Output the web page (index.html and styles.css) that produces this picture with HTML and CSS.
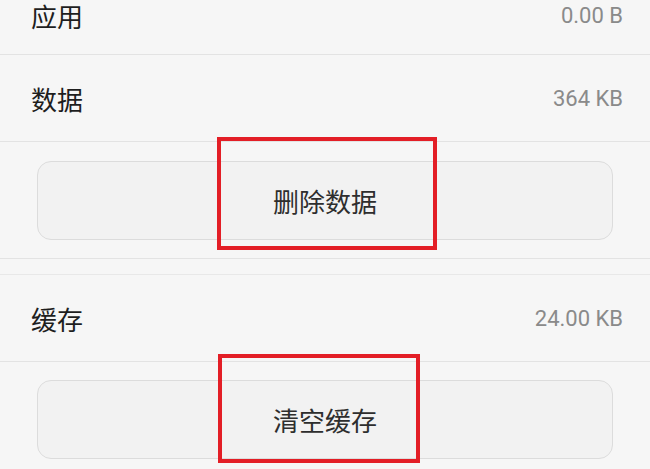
FILE: index.html
```html
<!DOCTYPE html>
<html lang="zh-CN">
<head>
<meta charset="utf-8">
<title>存储</title>
<link rel="stylesheet" href="styles.css">
</head>
<body>
<div class="page">
  <div class="list">
    <div class="row row-first">
      <span class="label">应用</span>
      <span class="value">0.00 B</span>
    </div>
    <div class="row">
      <span class="label">数据</span>
      <span class="value">364 KB</span>
    </div>
    <div class="action">
      <div class="btn">删除数据</div>
    </div>
    <div class="spacer"></div>
    <div class="row">
      <span class="label">缓存</span>
      <span class="value">24.00 KB</span>
    </div>
    <div class="action action-last">
      <div class="btn">清空缓存</div>
    </div>
  </div>
  <div class="mark mark-1"></div>
  <div class="mark mark-2"></div>
</div>
</body>
</html>
```

FILE: styles.css
```css
html, body {
  margin: 0;
  padding: 0;
}
body {
  background: #f6f6f6;
  font-family: "Noto Sans CJK SC", "Noto Sans", sans-serif;
}
.page {
  position: relative;
  width: 650px;
  height: 469px;
  overflow: hidden;
  background: #f6f6f6;
}
.list {
  display: flex;
  flex-direction: column;
}
.row {
  height: 86px;
  display: flex;
  align-items: center;
  justify-content: space-between;
  padding: 0 27px 0 31px;
  border-bottom: 1px solid #e3e3e3;
}
.row-first {
  box-sizing: border-box;
  height: 55px;
  align-items: flex-start;
}
.label {
  font-size: 26px;
  line-height: 31px;
  color: #1e1e1e;
}
.value {
  font-family: Roboto, "Liberation Sans", sans-serif;
  font-size: 22px;
  line-height: 31px;
  color: #8a8a8a;
}
.action {
  padding: 19px 37px 18px;
  border-bottom: 1px solid #e3e3e3;
}
.action-last {
  border-bottom: none;
  padding-top: 18px;
}
.spacer {
  height: 15px;
  border-bottom: 1px solid #e8e8e8;
}
.btn {
  box-sizing: border-box;
  height: 79px;
  border: 1.5px solid #dcdcdc;
  border-radius: 14px;
  background: #f2f2f2;
  display: flex;
  align-items: center;
  justify-content: center;
  font-size: 26px;
  color: #2e2e2e;
}
.mark {
  position: absolute;
  box-sizing: border-box;
  border: 4px solid #e31e26;
}
.mark-1 {
  left: 217px;
  top: 137px;
  width: 220px;
  height: 113px;
}
.mark-2 {
  left: 218px;
  top: 354px;
  width: 202px;
  height: 109px;
}
```
